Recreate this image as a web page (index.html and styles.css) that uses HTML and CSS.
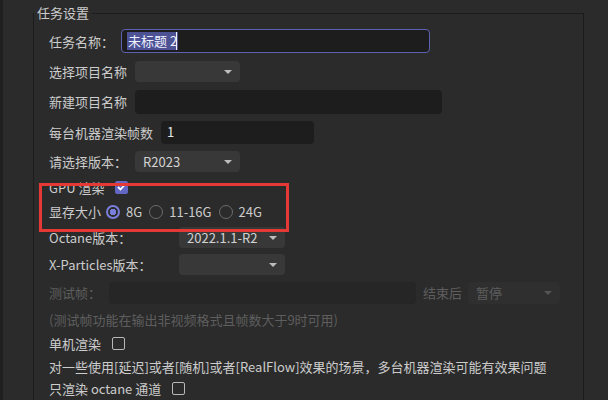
FILE: index.html
```html
<!DOCTYPE html>
<html lang="zh-CN">
<head>
    <meta charset="UTF-8">
    <meta name="viewport" content="width=device-width, initial-scale=1.0">
    <title>任务设置</title>
    <link rel="stylesheet" href="styles.css">
</head>
<body>
    <fieldset class="group">
        <legend>任务设置</legend>
        <div class="form">
            <div class="row h30">
                <span class="label">任务名称：</span>
                <div class="input focus w309"><span class="sel">未标题 2</span><span class="caret"></span></div>
            </div>
            <div class="row h30">
                <span class="label">选择项目名称</span>
                <div class="select w105"></div>
            </div>
            <div class="row h31">
                <span class="label">新建项目名称</span>
                <div class="input w307"></div>
            </div>
            <div class="row h30">
                <span class="label">每台机器渲染帧数</span>
                <div class="input w153 h23">1</div>
            </div>
            <div class="row h28">
                <span class="label">请选择版本：</span>
                <div class="select w105">R2023</div>
            </div>
            <div class="row h24">
                <span class="label">GPU 渲染</span>
                <span class="check on">
                    <svg width="9" height="8" viewBox="0 0 9 8"><path d="M1 4 L3.5 6.5 L8 1.5" fill="none" stroke="#fff" stroke-width="1.8"/></svg>
                </span>
            </div>
            <div class="row h25">
                <span class="label">显存大小</span>
                <span class="radio on"></span><span class="opt">8G</span>
                <span class="radio"></span><span class="opt">11-16G</span>
                <span class="radio"></span><span class="opt">24G</span>
            </div>
            <div class="row h26">
                <span class="label wide">Octane版本：</span>
                <div class="select w106">2022.1.1-R2</div>
            </div>
            <div class="row h28">
                <span class="label wide">X-Particles版本：</span>
                <div class="select w106"></div>
            </div>
            <div class="row h29 disabled">
                <span class="label">测试帧：</span>
                <div class="input off w307 h22"></div>
                <span class="label after">结束后</span>
                <div class="select off w92">暂停</div>
            </div>
            <div class="row h25 disabled">
                <span class="note">(测试帧功能在输出非视频格式且帧数大于9时可用)</span>
            </div>
            <div class="row h23">
                <span class="label">单机渲染</span>
                <span class="check"></span>
            </div>
            <div class="row h22">
                <span class="note">对一些使用[延迟]或者[随机]或者[RealFlow]效果的场景，多台机器渲染可能有效果问题</span>
            </div>
            <div class="row h22">
                <span class="label">只渲染 octane 通道</span>
                <span class="check"></span>
            </div>
        </div>
    </fieldset>

    <!-- annotation box -->
    <div class="mark"></div>
</body>
</html>
```

FILE: styles.css
```css
html, body {
    height: 100%;
}
body {
    margin: 0;
    position: relative;
    overflow: hidden;
    background: #2b2b2b;
    border-left: 3px solid #1f1f1f;
    font-family: "Noto Sans CJK SC", "Microsoft YaHei", sans-serif;
    font-size: 13px;
    color: #cccccc;
}
.group {
    box-sizing: border-box;
    width: 551px;
    height: 396px;
    margin: 4px 0 0 30px;
    padding: 0;
    border: 1px solid #1c1c1c;
    border-bottom: 0;
    overflow: hidden;
}
.group legend {
    padding: 0 3px;
    height: 18px;
    line-height: 18px;
    color: #cccccc;
}
.form {
    padding: 4px 0 0 15px;
}
.row {
    display: flex;
    align-items: center;
    white-space: nowrap;
}
.h22 { height: 22px; }
.h23 { height: 23px; }
.h24 { height: 24px; }
.h25 { height: 25px; }
.h26 { height: 26px; }
.h28 { height: 28px; }
.h29 { height: 29px; }
.h30 { height: 30px; }
.h31 { height: 31px; }

.label {
    margin-right: 8px;
}
.label.wide {
    width: 130px;
    margin-right: 0;
}
.label.after {
    margin-left: 7px;
    margin-right: 6px;
}

.input {
    box-sizing: border-box;
    height: 24px;
    padding: 0 6px;
    background: #1d1d1d;
    border-radius: 4px;
    color: #e6e6e6;
    line-height: 24px;
    display: flex;
    align-items: center;
}
.input.h23 { height: 23px; }
.input.h22 { height: 22px; }
.input.focus {
    border: 1px solid #5d61b3;
    padding: 0 5px;
    margin-left: -1px;
}
.input.off {
    background: #262626;
}
.sel {
    background: #4c5294;
    color: #eef0ff;
    line-height: 18px;
    padding: 0 1px;
}
.caret {
    width: 1px;
    height: 18px;
    background: #f0f0f0;
    margin-left: -2px;
}

.select {
    box-sizing: border-box;
    position: relative;
    height: 21px;
    padding: 0 8px;
    background: #383838;
    border-radius: 4px;
    line-height: 21px;
    color: #d2d2d2;
}
.select::after {
    content: "";
    position: absolute;
    right: 8px;
    top: 9px;
    border-left: 4px solid transparent;
    border-right: 4px solid transparent;
    border-top: 4px solid #bdbdbd;
}
.select.off {
    height: 22px;
    background: #2f2f2f;
    color: #5e5e5e;
}
.select.off::after {
    border-top-color: #555;
}

.w92 { width: 92px; }
.w105 { width: 105px; }
.w106 { width: 106px; }
.w153 { width: 153px; }
.w307 { width: 307px; }
.w309 { width: 309px; }

.check {
    box-sizing: border-box;
    width: 13px;
    height: 13px;
    border: 1.5px solid #b8b8b8;
    border-radius: 2px;
    margin-left: 3px;
    display: flex;
    align-items: center;
    justify-content: center;
}
.check.on {
    background: #6367c4;
    border-color: #6367c4;
    margin-left: 3px;
}

.radio {
    box-sizing: border-box;
    width: 14px;
    height: 14px;
    border-radius: 50%;
    border: 1.5px solid #6c6c6c;
    margin-right: 6px;
}
.row .label + .radio {
    margin-left: -3px;
}
.radio.on {
    border: 2px solid #7a7fdc;
    background: radial-gradient(circle, #7a7fdc 0 3px, transparent 3.5px);
}
.opt {
    margin-right: 7px;
}

.disabled,
.disabled .label {
    color: #5e5e5e;
}

.mark {
    position: absolute;
    left: 36px;
    top: 183px;
    width: 244px;
    height: 43px;
    border: 3px solid #e53935;
}
```
